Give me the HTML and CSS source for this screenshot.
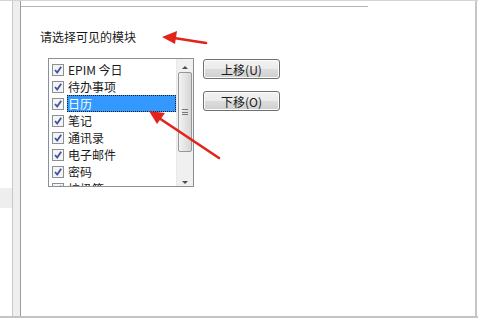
FILE: index.html
```html
<!DOCTYPE html>
<html lang="zh-CN">
<head>
    <meta charset="UTF-8">
    <title>可见模块</title>
    <link rel="stylesheet" href="styles.css">
</head>
<body>
    <div class="frame">
        <div class="gutter"><div class="gutter-tab"></div></div>
        <div class="strip"></div>
        <div class="panel">
            <div class="panel-top"></div>
            <div class="title">请选择可见的模块</div>

            <div class="row">
                <div class="listbox">
                    <div class="items">
                        <div class="item"><span class="check"></span><span class="text">EPIM 今日</span></div>
                        <div class="item"><span class="check"></span><span class="text">待办事项</span></div>
                        <div class="item"><span class="check"></span><span class="text selected">日历</span></div>
                        <div class="item"><span class="check"></span><span class="text">笔记</span></div>
                        <div class="item"><span class="check"></span><span class="text">通讯录</span></div>
                        <div class="item"><span class="check"></span><span class="text">电子邮件</span></div>
                        <div class="item"><span class="check"></span><span class="text">密码</span></div>
                        <div class="item"><span class="check"></span><span class="text">垃圾箱</span></div>
                    </div>
                    <div class="scrollbar">
                        <div class="arrow up"></div>
                        <div class="track">
                            <div class="thumb"><span class="grip"></span></div>
                        </div>
                        <div class="arrow down"></div>
                    </div>
                </div>

                <div class="buttons">
                    <button>上移(U)</button>
                    <button>下移(O)</button>
                </div>
            </div>
        </div>

        <svg class="marks" width="478" height="318" viewBox="0 0 478 318">
            <line x1="206" y1="43" x2="174" y2="38" stroke="#e3221b" stroke-width="2.6" stroke-linecap="round"/>
            <polygon points="162,37 177,31 175,44" fill="#e3221b"/>
            <line x1="219" y1="158" x2="159" y2="118" stroke="#e3221b" stroke-width="2.6" stroke-linecap="round"/>
            <polygon points="149,111 165,113 157,124" fill="#e3221b"/>
        </svg>
    </div>
</body>
</html>
```

FILE: styles.css
```css
* {
    box-sizing: border-box;
}
body {
    margin: 0;
    background: #fff;
    font-family: "Noto Sans CJK SC", "Liberation Sans", sans-serif;
    font-size: 12px;
    color: #1a1a1a;
}
.frame {
    position: relative;
    display: flex;
    width: 478px;
    height: 318px;
    border-top: 1px solid #d4d4d4;
    border-bottom: 2px solid #c4c4c4;
    overflow: hidden;
}
.gutter {
    width: 12px;
    background: #fff;
    padding-top: 187px;
}
.gutter-tab {
    height: 20px;
    background: #eeeeee;
}
.strip {
    width: 9px;
    background: #eeeeee;
    border-left: 1px solid #c9c9c9;
    border-right: 1px solid #9c9c9c;
}
.panel {
    flex: 1;
    border-right: 2px solid #c6c6c6;
    margin-right: 1px;
}
.panel-top {
    margin-top: 5px;
    width: 347px;
    border-top: 1px solid #b4b4b4;
}
.title {
    margin: 22px 0 0 19px;
    line-height: 16px;
    height: 16px;
}
.row {
    display: flex;
    align-items: flex-start;
    margin: 13px 0 0 27px;
}
.listbox {
    display: flex;
    width: 146px;
    height: 129px;
    border: 1px solid #8a8f98;
    background: #fff;
    overflow: hidden;
}
.items {
    flex: 1;
    padding-top: 2px;
}
.item {
    display: flex;
    align-items: center;
    height: 17px;
}
.check {
    width: 12px;
    height: 12px;
    margin: 0 3px 0 3px;
    border: 1px solid #8e8f8f;
    background: #f4f4f4 url("data:image/svg+xml,%3Csvg xmlns='http://www.w3.org/2000/svg' width='10' height='10'%3E%3Cpath d='M2 5 L4.2 7.6 L8.2 1.8' fill='none' stroke='%233a55a8' stroke-width='1.8'/%3E%3C/svg%3E") center no-repeat;
}
.text {
    line-height: 15px;
    padding: 0 2px 0 1px;
    white-space: nowrap;
}
.text.selected {
    flex: 1;
    background: #3399ff;
    color: #fff;
    outline: 1px dotted #1a1a1a;
    outline-offset: -1px;
    height: 17px;
    line-height: 17px;
}
.scrollbar {
    width: 17px;
    display: flex;
    flex-direction: column;
    background: #f0f0f0;
    border-left: 1px solid #e8e8e8;
}
.arrow {
    height: 17px;
    position: relative;
}
.arrow::after {
    content: "";
    position: absolute;
    left: 5px;
    border-left: 3px solid transparent;
    border-right: 3px solid transparent;
}
.arrow.up::after {
    top: 7px;
    border-bottom: 3px solid #4d4d4d;
}
.arrow.down::after {
    top: 8px;
    border-top: 3px solid #4d4d4d;
}
.track {
    flex: 1;
    padding-bottom: 21px;
}
.thumb {
    height: 80px;
    margin: 0 1px;
    border: 1px solid #979797;
    border-radius: 2px;
    background: linear-gradient(to right, #f3f3f3, #e4e4e4 50%, #d6d6d6);
    display: flex;
    align-items: center;
    justify-content: center;
}
.grip {
    width: 6px;
    height: 6px;
    border-top: 1px solid #777;
    border-bottom: 1px solid #777;
    position: relative;
}
.grip::after {
    content: "";
    position: absolute;
    left: 0;
    right: 0;
    top: 2px;
    border-top: 1px solid #777;
}
.buttons {
    display: flex;
    flex-direction: column;
    gap: 12px;
    margin: 1px 0 0 9px;
}
button {
    width: 77px;
    height: 20px;
    padding: 0;
    font-family: "Noto Sans CJK SC", "Liberation Sans", sans-serif;
    font-size: 12px;
    color: #1a1a1a;
    border: 1px solid #707070;
    border-radius: 3px;
    background: linear-gradient(to bottom, #f3f3f3, #ebebeb 48%, #dcdcdc 52%, #cfcfcf);
    box-shadow: inset 0 0 0 1px #fcfcfc;
}
.marks {
    position: absolute;
    left: 0;
    top: -1px;
    pointer-events: none;
}
```
